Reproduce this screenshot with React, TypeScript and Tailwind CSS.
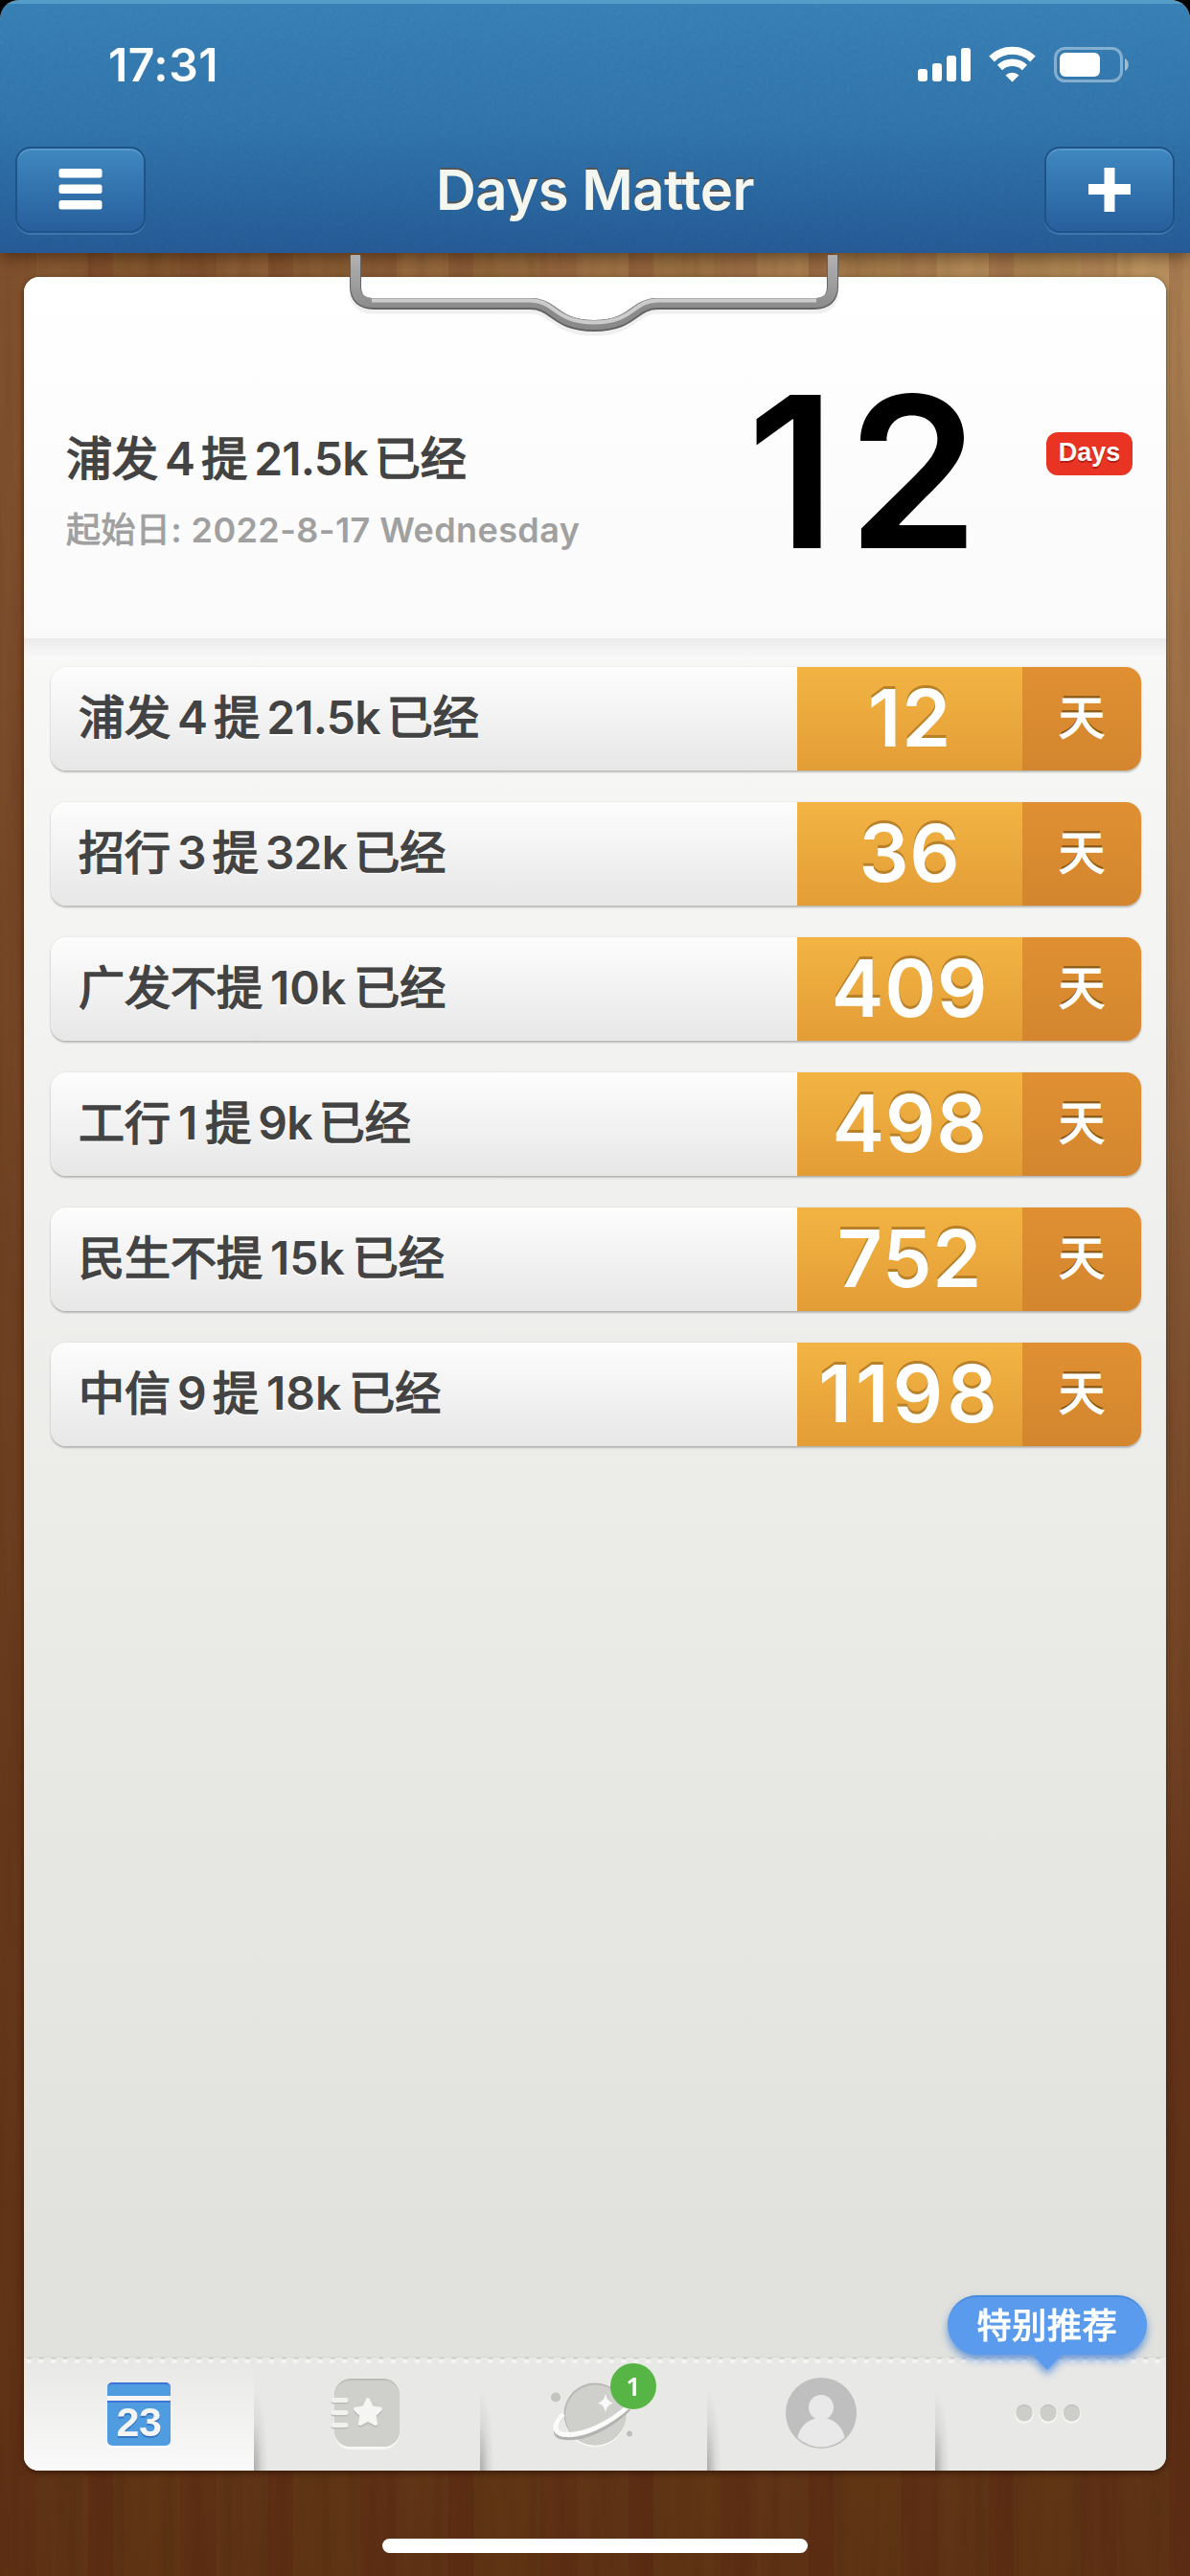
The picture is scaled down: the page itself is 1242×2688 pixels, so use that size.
import { Fragment } from "react"
import clsx from "clsx"

interface DayEvent {
  id: number
  label: string[]
  days: number
}

// labels are kept as runs so Chinese and latin runs get a small gap between them
const EVENTS: DayEvent[] = [
  { id: 1, label: ["浦发", "4", "提", "21.5k", "已经"], days: 12 },
  { id: 2, label: ["招行", "3", "提", "32k", "已经"], days: 36 },
  { id: 3, label: ["广发不提", "10k", "已经"], days: 409 },
  { id: 4, label: ["工行", "1", "提", "9k", "已经"], days: 498 },
  { id: 5, label: ["民生不提", "15k", "已经"], days: 752 },
  { id: 6, label: ["中信", "9", "提", "18k", "已经"], days: 1198 }
]

function EventLabel({ parts }: { parts: string[] }) {
  return (
    <span className="flex gap-[8px] whitespace-nowrap text-[48px] leading-[60px] text-[#434343]">
      {parts.map((p, i) => {
        const latin = /^[\d.k]+$/.test(p)
        return (
          <span
            key={i}
            className={clsx(
              latin ? "font-semibold" : "font-normal [-webkit-text-stroke:1.6px_#434343]",
              latin && !p.startsWith("1") && "-mx-[1px] tracking-[-0.8px]"
            )}
          >
            {p}
          </span>
        )
      })}
    </span>
  )
}

function StatusBar() {
  return (
    <div className="flex h-[128px] items-center justify-between pl-[113px] pr-[63px]">
      <span className="text-[48px] leading-[56px] font-semibold tracking-[0.5px] text-white">17:31</span>
      <svg width="222" height="46" viewBox="0 0 222 46" fill="#fff">
        <rect x="1" y="27" width="10" height="13" rx="3" />
        <rect x="16" y="21" width="10" height="19" rx="3" />
        <rect x="31" y="13" width="10" height="27" rx="3" />
        <rect x="46" y="5" width="10" height="35" rx="3" />
        <g fill="none" stroke="#fff">
          <path d="M78 16.500A31 31 0 0 1 121 16.500" strokeWidth="8" />
          <path d="M86.500 25.500A19 19 0 0 1 112.500 25.500" strokeWidth="7.500" />
        </g>
        <path d="M92.500 33.500a10 10 0 0 1 14 0L99.500 40.500z" />
        <rect x="144.500" y="5.500" width="69" height="34" rx="10" fill="none" stroke="#fff" strokeOpacity="0.4" strokeWidth="3" />
        <rect x="149" y="10" width="42" height="25" rx="6" />
        <path d="M217 16c5 2 5 11 0 13z" fillOpacity="0.5" />
      </svg>
    </div>
  )
}

function NavButton({ children }: { children: React.ReactNode }) {
  return (
    <button className="flex h-[90px] w-[136px] items-center justify-center rounded-[16px] border-2 border-[#1d5386] bg-linear-to-b from-[#4088bf] to-[#275f9c] shadow-[0_2px_0_rgba(90,150,200,0.45),inset_0_2px_0_rgba(110,170,215,0.5)]">
      {children}
    </button>
  )
}

function Header() {
  return (
    <header className="relative h-[264px] border-t-4 border-[#559dc9] bg-linear-to-b from-[#367db3] via-[#2f71a8] to-[#245892] shadow-[0_4px_16px_rgba(40,20,0,0.55)]">
      <svg className="absolute inset-0 h-full w-full opacity-10 mix-blend-overlay">
        <filter id="felt">
          <feTurbulence type="fractalNoise" baseFrequency="0.25" numOctaves="3" />
          <feColorMatrix type="saturate" values="0" />
        </filter>
        <rect width="100%" height="100%" filter="url(#felt)" />
      </svg>
      <div className="relative">
        <StatusBar />
        <div className="flex items-center justify-between px-[16px] pt-[21px]">
          <NavButton>
            <svg width="46" height="46" viewBox="0 0 46 46" fill="#fff">
              <rect x="0.500" y="1" width="45" height="9.500" rx="2.500" />
              <rect x="0.500" y="17.500" width="45" height="9.500" rx="2.500" />
              <rect x="0.500" y="34" width="45" height="9.500" rx="2.500" />
            </svg>
          </NavButton>
          <h1 className="text-[58px] leading-[70px] font-semibold tracking-[-0.5px] text-[#f4f6f0] [text-shadow:0_-2px_0_#545454]">
            Days Matter
          </h1>
          <NavButton>
            <svg width="46" height="46" viewBox="0 0 46 46" fill="#fff">
              <rect x="1" y="17" width="44" height="11" />
              <rect x="17.500" y="0" width="11" height="46" />
            </svg>
          </NavButton>
        </div>
      </div>
    </header>
  )
}

function Wood() {
  return (
    <div className="absolute inset-0 bg-linear-to-b from-[#8f6238] via-[#734826] via-50% to-[#5f3415]">
      <div className="absolute inset-0 bg-[radial-gradient(ellipse_1050px_1800px_at_100%_8%,rgba(205,170,115,0.8),rgba(205,170,115,0)_100%)]" />
      <svg className="absolute inset-0 h-full w-full opacity-30 mix-blend-multiply">
        <filter id="grain">
          <feTurbulence type="fractalNoise" baseFrequency="0.06 0.003" numOctaves="4" seed="7" />
          <feColorMatrix values="0.9 0 0 0 0.35  0.9 0 0 0 0.2  0.9 0 0 0 0.1  0 0 0 0 1" />
        </filter>
        <rect width="100%" height="100%" filter="url(#grain)" />
      </svg>
      <div className="absolute inset-0 bg-[repeating-linear-gradient(90deg,rgba(80,15,10,0.1)_0_38px,rgba(0,0,0,0)_38px_92px,rgba(80,15,10,0.16)_92px_118px,rgba(90,60,10,0.1)_118px_188px)]" />
    </div>
  )
}

function Clip() {
  const d = "M7 3V35Q7 53 26 53H189C216 53 214 76 256 76S296 53 323 53H486Q505 53 505 35V3"
  return (
    <svg className="absolute left-[339px] top-[-25px]" width="516" height="100" viewBox="0 0 516 100" fill="none">
      <defs>
        <linearGradient id="metal" x1="0" y1="0" x2="0" y2="60" gradientUnits="userSpaceOnUse">
          <stop offset="0" stopColor="#b3b3b3" />
          <stop offset="0.500" stopColor="#a0a0a0" />
          <stop offset="1" stopColor="#8a8a8a" />
        </linearGradient>
      </defs>
      <path d={d} stroke="#000" strokeOpacity="0.06" strokeWidth="13" transform="translate(0 4)" />
      <path d={d} stroke="#636363" strokeWidth="12" />
      <path d={d} stroke="url(#metal)" strokeWidth="10" transform="translate(0 -1)" />
      <path d="M24 49.500H189C216 49.500 214 72.500 256 72.500S296 49.500 323 49.500H488" stroke="#cccccc" strokeWidth="4" />
    </svg>
  )
}

function Featured() {
  return (
    <section className="flex h-[377px] items-start rounded-t-[16px] bg-linear-to-b from-white to-[#fafafa]">
      <div className="w-[650px] pl-[44px] pt-[160px]">
        <EventLabel parts={EVENTS[0].label} />
        <p className="mt-[19px] whitespace-nowrap text-[36px] leading-[50px] font-semibold tracking-[0.4px] text-[#a0a0a0]">
          <span className="font-normal [-webkit-text-stroke:1px_#a0a0a0]">起始日</span>: 2022-8-17 Wednesday
        </p>
      </div>
      <div className="w-[417px] pl-[46px] pt-[70px] text-center text-[220px] leading-[266px] font-semibold tracking-[12px] text-black">12</div>
      <div className="mt-[162px] flex h-[45px] w-[90px] items-center justify-center rounded-[12px] bg-[#e93323] font-['Liberation_Sans'] text-[27px] leading-[30px] font-bold text-white [text-shadow:0_2px_0_rgba(80,0,0,0.4)]">
        <span className="-mt-[3px]">Days</span>
      </div>
    </section>
  )
}

function EventRow({ event }: { event: DayEvent }) {
  return (
    <li className="flex h-[108px] overflow-hidden rounded-[16px] shadow-[0_2px_2px_rgba(0,0,0,0.22),0_0_2px_rgba(0,0,0,0.12)]">
      <div className="flex w-[779px] items-center bg-linear-to-b from-[#fdfdfd] to-[#e7e7e7] pl-[29px] pb-[2px] [text-shadow:0_2px_0_#fff]">
        <EventLabel parts={event.label} />
      </div>
      <div
        className={clsx(
          "flex w-[235px] items-center justify-center bg-linear-to-b from-[#f3b443] to-[#e39d36] text-[82px] leading-[106px] font-semibold text-white [text-shadow:0_-3px_0_#b98129]",
          event.days > 999 ? "tracking-[4px]" : "tracking-[0.8px]"
        )}
      >
        {event.days}
      </div>
      <div className="flex flex-1 items-center justify-center bg-linear-to-b from-[#e09032] to-[#d4862f] pb-[2px] text-[48px] leading-[60px] text-white [-webkit-text-stroke:1.6px_#fff] [text-shadow:0_-3px_0_#8b5a16]">
        天
      </div>
    </li>
  )
}

function StarIcon() {
  return (
    <svg width="80" height="80" viewBox="0 0 80 80">
      <rect x="6" y="6" width="68" height="71" rx="17" fill="#f7f7f6" />
      <rect x="6" y="3" width="68" height="71" rx="17" fill="#bcbdb9" />
      <rect x="6" y="5" width="68" height="69" rx="16" fill="#cfd0cc" />
      <path d="M5 27H18M5 40H18M5 53H18" stroke="#bbbcb8" strokeWidth="5" strokeLinecap="round" />
      <path d="M5 25.500H18M5 38.500H18M5 51.500H18" stroke="#f1f1f0" strokeWidth="5" strokeLinecap="round" />
      <path d="M41 25L45 33.500 54 34.700 47.500 41 49 50 41 45.800 33 50 34.500 41 28 34.700 37 33.500Z" fill="#bbbcb8" stroke="#bbbcb8" strokeWidth="4" strokeLinejoin="round" transform="translate(0 2)" />
      <path d="M41 25L45 33.500 54 34.700 47.500 41 49 50 41 45.800 33 50 34.500 41 28 34.700 37 33.500Z" fill="#f5f5f4" stroke="#f5f5f4" strokeWidth="4" strokeLinejoin="round" />
    </svg>
  )
}

function CalendarIcon() {
  return (
    <div className="h-[66px] w-[66px] overflow-hidden rounded-[5px] border-t-2 border-[#3f74d6] bg-[#4f9ce1] shadow-[0_2px_0_#fff]">
      <div className="mt-[12px] h-[7px] border-b-2 border-[#3f74d6] bg-[#f4f4f4]" />
      <div className="text-center font-['Liberation_Sans'] text-[43px] leading-[40px] font-bold tracking-[-0.5px] text-[#f5f5f5] [text-shadow:0_2px_0_#3878c0]">
        23
      </div>
    </div>
  )
}

function PlanetIcon() {
  return (
    <svg width="100" height="80" viewBox="0 0 100 80" fill="none">
      <circle cx="51" cy="42.500" r="32" fill="#f7f7f6" />
      <circle cx="51" cy="40" r="32.500" fill="#b9bab6" />
      <circle cx="51.500" cy="41" r="31.500" fill="#cfd0cc" />
      <circle cx="10" cy="22.500" r="5" fill="#c4c5c1" />
      <circle cx="87" cy="60.500" r="3" fill="#bfc0bc" />
      <path d="M17 40C7 51 7 60 16 62 37 66 66 53 87 32" stroke="#b2b3af" strokeWidth="3" transform="translate(0 3)" />
      <path d="M18 40C8 50 7 59 17 61 38 64 66 50 87 31" stroke="#fbfbfb" strokeWidth="5" />
      <path d="M62 19Q63.500 27 70 28.500 63.500 30 62 38 60.500 30 54 28.500 60.500 27 62 19Z" fill="#fafafa" />
    </svg>
  )
}

function UserIcon() {
  return (
    <svg width="76" height="76" viewBox="0 0 76 76">
      <defs>
        <clipPath id="face">
          <circle cx="38" cy="38" r="35.500" />
        </clipPath>
      </defs>
      <circle cx="38" cy="38" r="37" fill="#bfbfbf" />
      <g clipPath="url(#face)" fill="#e9e9e9">
        <circle cx="38" cy="32" r="13" />
        <path d="M13 80V66C15 50 27 43 38 43S61 50 63 66V80Z" />
      </g>
    </svg>
  )
}

function MoreIcon() {
  return (
    <svg width="76" height="30" viewBox="0 0 76 30">
      {[13, 38, 62.5].map((cx) => (
        <Fragment key={cx}>
          <circle cx={cx} cy="16.500" r="9.500" fill="#f5f5f4" />
          <circle cx={cx} cy="14.500" r="8.500" fill="#bdbdba" />
          <circle cx={cx} cy="15.500" r="8.300" fill="#cdcdca" />
        </Fragment>
      ))}
    </svg>
  )
}

// soft fold shadow at the left edge of every unselected tab
function Fold() {
  return (
    <div className="absolute bottom-0 left-0 h-[112px] w-[20px] bg-[radial-gradient(ellipse_15px_85px_at_0%_100%,rgba(0,0,0,0.26),rgba(0,0,0,0.06)_60%,rgba(0,0,0,0)_100%)]" />
  )
}

function TabBar() {
  return (
    <nav className="relative flex h-[119px] rounded-b-[15px] bg-[#e8e8e6]">
      <div className="flex w-[240px] justify-center rounded-bl-[15px] bg-linear-to-b from-[#e7e7e5] to-[#fafafa] pt-[27px]">
        <CalendarIcon />
      </div>
      <div className="relative flex w-[236px] justify-center pt-[20px]">
        <Fold />
        <StarIcon />
      </div>
      <div className="relative flex w-[237px] justify-center pt-[20px]">
        <Fold />
        <PlanetIcon />
        <span className="absolute left-[136px] top-[7px] flex h-[48px] w-[48px] items-center justify-center rounded-full bg-[#56b545] font-['Noto_Sans'] text-[27px] leading-[30px] font-semibold text-white">
          1
        </span>
      </div>
      <div className="relative flex w-[238px] justify-center pt-[21px]">
        <Fold />
        <UserIcon />
      </div>
      <div className="relative flex flex-1 justify-center pr-[5px] pt-[44px]">
        <Fold />
        <MoreIcon />
      </div>

      {/* perforation */}
      <svg className="absolute left-0 top-0" width="1191" height="12">
        <path d="M4 1.500H1191" stroke="#cccdc8" strokeWidth="2" strokeLinecap="round" strokeDasharray="3 9.670" />
        <path d="M4 5H1191" stroke="#f4f4f3" strokeWidth="4" strokeLinecap="round" strokeDasharray="2 10.670" />
        <path d="M0 0.500H1191" stroke="#d9dad5" strokeWidth="1" />
      </svg>

      <div className="absolute left-[964px] top-[-64px] drop-shadow-[0_5px_4px_rgba(60,125,215,0.75)]">
        <div className="flex h-[62px] w-[208px] items-center justify-center rounded-full border-t-2 border-[#4a8bdc] bg-[#5a9bee] text-[36px] leading-[48px] tracking-[0.7px] text-white [-webkit-text-stroke:1.2px_#fff]">
          特别推荐
        </div>
        <svg className="ml-[88px] -mt-px" width="32" height="17" viewBox="0 0 32 17">
          <path d="M0 0H32L16 17Z" fill="#5a9bee" />
        </svg>
      </div>
    </nav>
  )
}

export default function App() {
  return (
    <div className="h-[2688px] w-[1242px] bg-black font-[Inter,'Noto_Sans_CJK_SC',sans-serif]">
      <div className="relative flex h-full flex-col overflow-hidden rounded-t-[20px]">
        <Wood />
        <Header />

        <main className="relative mx-[25px] mt-[25px] flex h-[2289px] flex-col rounded-[16px] bg-linear-to-b from-[#fdfdfd] to-[#e1e2dd] to-90% shadow-[0_2px_6px_rgba(30,10,0,0.6)]">
          <Featured />
          <div className="h-[22px] bg-linear-to-b from-[#ebebeb] to-[#fafafa]" />
          <ul className="mt-[8px] flex flex-1 flex-col gap-[33px] pl-[28px] pr-[26px]">
            {EVENTS.map((e) => (
              <EventRow key={e.id} event={e} />
            ))}
          </ul>
          <TabBar />
          <Clip />
        </main>

        <div className="relative mx-auto mt-[71px] h-[15px] w-[444px] rounded-full bg-white" />
      </div>
    </div>
  )
}
